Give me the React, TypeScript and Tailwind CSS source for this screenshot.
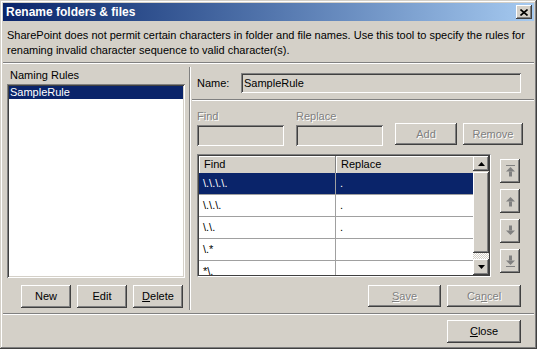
import React from 'react';

const RAISED =
  'shadow-[inset_-1px_-1px_#404040,inset_1px_1px_#ffffff,inset_-2px_-2px_#808080,inset_2px_2px_#d4d0c8]';
const SUNKEN =
  'shadow-[inset_1px_1px_#808080,inset_-1px_-1px_#ffffff,inset_2px_2px_#404040,inset_-2px_-2px_#d4d0c8]';
const DISABLED = 'text-[#808080] [text-shadow:1px_1px_0_#ffffff]';

const rules = [
  { find: '\\.\\.\\.\\.', replace: '.' },
  { find: '\\.\\.\\.', replace: '.' },
  { find: '\\.\\.', replace: '.' },
  { find: '\\.*', replace: '' },
  { find: '*\\.', replace: '' },
];

function Button({
  children,
  className = '',
  disabled = false,
}: {
  children: React.ReactNode;
  className?: string;
  disabled?: boolean;
}) {
  return (
    <div
      className={`flex items-center justify-center bg-[#d4d0c8] ${RAISED} ${
        disabled ? DISABLED : 'text-black'
      } ${className}`}
    >
      {children}
    </div>
  );
}

function Arrow({ dir, bar }: { dir: 'up' | 'down'; bar?: boolean }) {
  const up = dir === 'up';
  return (
    <svg width="9" height="12" viewBox="0 0 9 12" fill="#808080">
      {up ? (
        <>
          {bar && <rect x="0" y="0" width="9" height="1" />}
          <polygon points="4.5,2 9,6.5 0,6.5" />
          <rect x="3" y="6.5" width="3" height="5" />
        </>
      ) : (
        <>
          <rect x="3" y="0.5" width="3" height="5" />
          <polygon points="0,5.5 9,5.5 4.5,10" />
          {bar && <rect x="0" y="11" width="9" height="1" />}
        </>
      )}
    </svg>
  );
}

function Triangle({ up }: { up: boolean }) {
  return (
    <svg width="7" height="4" viewBox="0 0 7 4" fill="#000">
      {up ? <polygon points="3.5,0 7,4 0,4" /> : <polygon points="0,0 7,0 3.5,4" />}
    </svg>
  );
}

export default function App() {
  return (
    <div
      className={`w-[537px] h-[349px] bg-[#d4d0c8] p-[3px] flex flex-col font-['Liberation_Sans',Arial,sans-serif] text-[11px] text-black shadow-[inset_-1px_-1px_#404040,inset_1px_1px_#d4d0c8,inset_-2px_-2px_#808080,inset_2px_2px_#ffffff]`}
    >
      {/* title bar */}
      <div className="h-[18px] flex items-center justify-between pl-[3px] pr-[2px] bg-gradient-to-r from-[#0a246a] to-[#a6caf0]">
        <span className="text-white font-bold text-[12px] leading-none">Rename folders &amp; files</span>
        <div className={`w-[16px] h-[14px] bg-[#d4d0c8] flex items-center justify-center ${RAISED}`}>
          <svg width="8" height="7" viewBox="0 0 8 7">
            <path d="M0.5 0.5 L7.5 6.5 M7.5 0.5 L0.5 6.5" stroke="#000" strokeWidth="1.6" />
          </svg>
        </div>
      </div>

      <div className="pt-[7px] px-[4px] leading-[15px]">
        SharePoint does not permit certain characters in folder and file names. Use this tool to specify the rules for
        <br />
        renaming invalid character sequence to valid character(s).
      </div>

      <div className="mt-[4px] h-[2px] border-t border-[#808080] border-b border-b-white" />

      {/* main area */}
      <div className="flex h-[249px]">
        {/* left column */}
        <div className="w-[178px] ml-[4px] pt-[5px] flex flex-col">
          <div className="leading-[13px] pl-[3px]">Naming Rules</div>
          <div className={`mt-[2px] h-[194px] bg-white p-[2px] ${SUNKEN}`}>
            <div className="h-[13px] leading-[13px] bg-[#0a246a] text-white pl-[1px]">SampleRule</div>
          </div>
          <div className="flex gap-[6px] pl-[14px] mt-[7px]">
            <Button className="w-[50px] h-[23px]">New</Button>
            <Button className="w-[50px] h-[23px]">Edit</Button>
            <Button className="w-[50px] h-[23px]">
              <span>
                <span className="underline">D</span>elete
              </span>
            </Button>
          </div>
        </div>

        {/* vertical separator */}
        <div className="ml-[4px] mt-[3px] w-[2px] h-[243px] border-l border-[#808080] border-r border-r-white" />

        {/* right column */}
        <div className="flex-1 flex flex-col">
          <div className="flex items-center pl-[6px] pt-[9px]">
            <div className="w-[44px]">Name:</div>
            <div className={`w-[280px] h-[20px] bg-[#d4d0c8] flex items-center pl-[3px] ${SUNKEN}`}>SampleRule</div>
          </div>

          <div className="mt-[6px] ml-[1px] h-[2px] border-t border-[#808080] border-b border-b-white" />

          <div className="flex items-end pl-[6px] mt-[9px]">
            <div className="flex flex-col">
              <div className={`leading-[13px] ${DISABLED}`}>Find</div>
              <div className={`mt-[2px] w-[87px] h-[21px] bg-[#d4d0c8] ${SUNKEN}`} />
            </div>
            <div className="flex flex-col ml-[12px]">
              <div className={`leading-[13px] ${DISABLED}`}>Replace</div>
              <div className={`mt-[2px] w-[87px] h-[21px] bg-[#d4d0c8] ${SUNKEN}`} />
            </div>
            <Button disabled className="ml-[12px] mb-[1px] w-[62px] h-[22px]">
              Add
            </Button>
            <Button disabled className="ml-[6px] mb-[1px] w-[60px] h-[22px]">
              Remove
            </Button>
          </div>

          <div className="flex pl-[6px] mt-[8px]">
            {/* table */}
            <div className="w-[294px] h-[123px] p-[1px] bg-[#404040] border-t border-l border-[#808080] border-r border-b border-r-white border-b-white flex">
              <div className="flex-1 flex flex-col bg-white overflow-hidden">
                <div className="flex h-[17px] shrink-0 bg-[#d4d0c8]">
                  <div className="w-[137px] pl-[5px] flex items-center border-r border-[#808080] shadow-[inset_1px_1px_#ffffff]">
                    Find
                  </div>
                  <div className="flex-1 pl-[5px] flex items-center shadow-[inset_1px_1px_#ffffff]">Replace</div>
                </div>
                {rules.map((r, i) => (
                  <div
                    key={i}
                    className={`flex h-[22px] shrink-0 border-b border-[#a0a0a0] ${
                      i === 0 ? 'bg-[#0a246a] text-white' : ''
                    }`}
                  >
                    <div className="w-[137px] pl-[4px] flex items-center border-r border-[#a0a0a0]">{r.find}</div>
                    <div className="flex-1 pl-[4px] flex items-center">{r.replace}</div>
                  </div>
                ))}
              </div>
              {/* scrollbar */}
              <div className="w-[16px] flex flex-col bg-[#d4d0c8]">
                <div className={`h-[15px] flex items-center justify-center ${RAISED}`}>
                  <Triangle up />
                </div>
                <div className={`flex-1 mt-[1px] ${RAISED}`} />
                <div className="h-[6px] bg-[repeating-conic-gradient(#d4d0c8_0%_25%,#ffffff_0%_50%)] bg-size-[2px_2px]" />
                <div className={`h-[16px] flex items-center justify-center ${RAISED}`}>
                  <Triangle up={false} />
                </div>
              </div>
            </div>

            {/* move buttons */}
            <div className="ml-[9px] mt-[5px] flex flex-col gap-[6px]">
              <Button className="w-[20px] h-[24px]">
                <Arrow dir="up" bar />
              </Button>
              <Button className="w-[20px] h-[24px]">
                <Arrow dir="up" />
              </Button>
              <Button className="w-[20px] h-[24px]">
                <Arrow dir="down" />
              </Button>
              <Button className="w-[20px] h-[24px]">
                <Arrow dir="down" bar />
              </Button>
            </div>
          </div>

          <div className="flex justify-end gap-[6px] pr-[13px] mt-[8px]">
            <Button disabled className="w-[73px] h-[22px]">
              <span>
                <span className="underline">S</span>ave
              </span>
            </Button>
            <Button disabled className="w-[74px] h-[22px]">
              <span>
                Ca<span className="underline">n</span>cel
              </span>
            </Button>
          </div>
        </div>
      </div>

      <div className="h-[2px] border-t border-[#808080] border-b border-b-white" />

      <div className="flex justify-end pr-[13px] pt-[5px]">
        <Button className="w-[74px] h-[23px]">
          <span>
            <span className="underline">C</span>lose
          </span>
        </Button>
      </div>
    </div>
  );
}
